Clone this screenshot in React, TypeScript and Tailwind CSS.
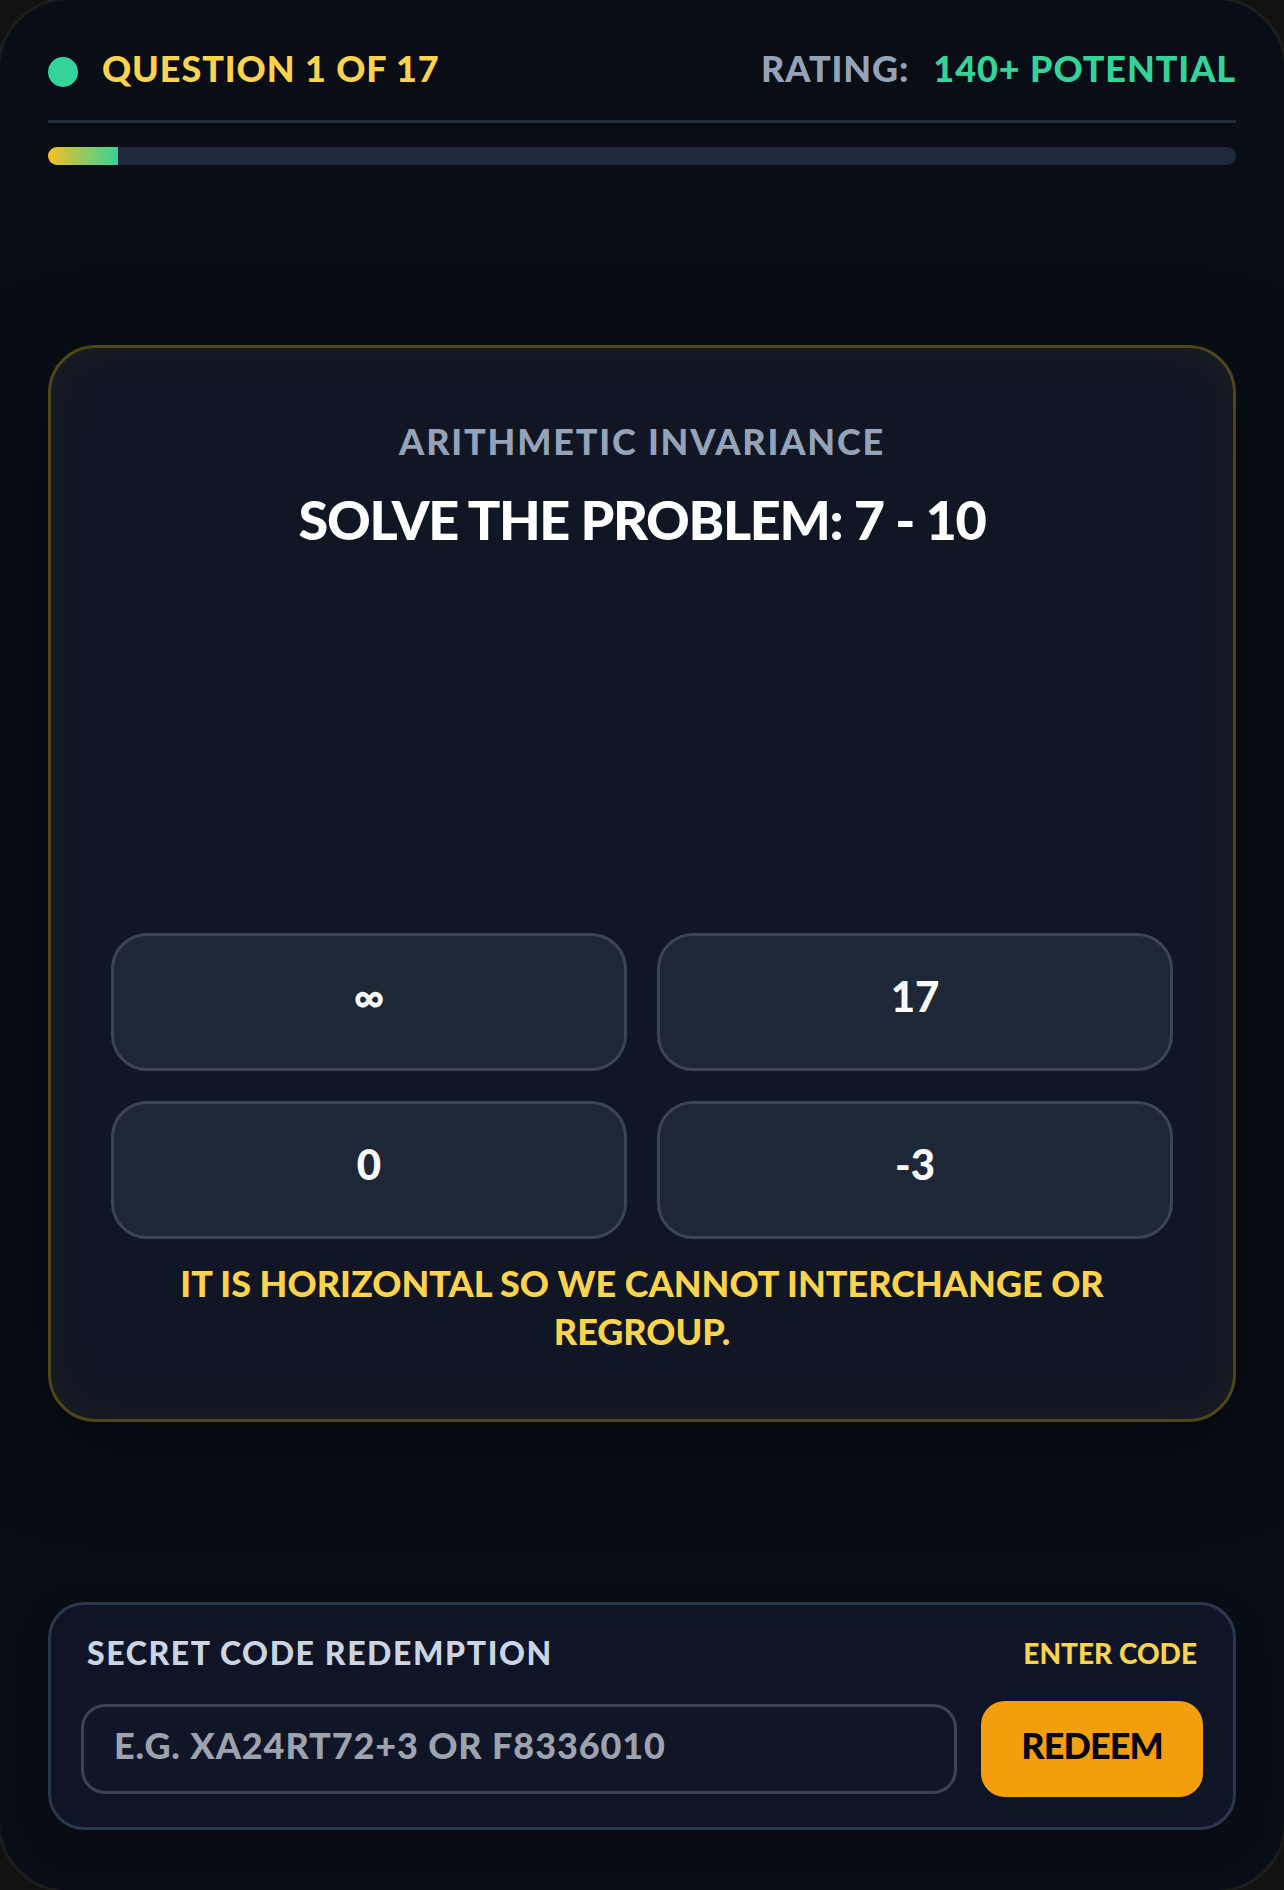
import React, { useState } from 'react';
import clsx from 'clsx';

const TOTAL = 17;

const ANSWERS = ['∞', '17', '0', '-3'];

const Header = ({ current }: { current: number }) => (
  <header>
    <div className="flex items-center justify-between border-b-[3px] border-[#232c3f] pb-7">
      <div className="flex items-center gap-6 text-[#fcd34d]">
        <span className="mt-2 size-[30px] rounded-full bg-[#34d399]" />
        <span className="tracking-wide">QUESTION {current} OF {TOTAL}</span>
      </div>
      <div className="flex items-center gap-6">
        <span className="tracking-wide text-[#94a3b8]">RATING:</span>
        <span className="tracking-wide text-[#34d399]">140+ POTENTIAL</span>
      </div>
    </div>
    <div className="mt-6 h-[18px] overflow-hidden rounded-full bg-[#1e293b]">
      <div
        className="h-full bg-linear-to-r/srgb from-[#fbbf24] to-[#34d399]"
        style={{ width: `${(current / TOTAL) * 100}%` }}
      />
    </div>
  </header>
);

const AnswerButton = ({ label, selected, onClick }: { label: string, selected: boolean, onClick: () => void }) => (
  <button
    onClick={onClick}
    className={clsx(
      'h-[138px] cursor-pointer rounded-[36px] border-[3px] bg-[#1e2737] pb-3 text-[42px] leading-[48px] text-slate-50',
      selected ? 'border-[#fbbf24]' : 'border-[#3d4453]'
    )}
  >
    {label}
  </button>
);

const QuestionCard = () => {
  const [selected, setSelected] = useState<string | null>(null);

  return (
    <section className="w-full rounded-[48px] border-[3px] border-[#4e4519] bg-[#101623] px-[60px] pt-[69px] pb-16 text-center shadow-[0_24px_90px_rgba(0,0,0,0.5),inset_0_0_45px_rgba(250,204,21,0.05)]">
      <div className="min-h-[516px]">
        <p className="tracking-wider text-[#94a3b8]">ARITHMETIC INVARIANCE</p>
        <h1 className="mt-5 text-[54px] leading-[70px] tracking-tight text-white">SOLVE THE PROBLEM: 7 - 10</h1>
      </div>
      <div className="grid grid-cols-2 gap-[30px]">
        {ANSWERS.map((a) => (
          <AnswerButton key={a} label={a} selected={selected === a} onClick={() => setSelected(a)} />
        ))}
      </div>
      <p className="mt-5 text-[#fcd34d]">
        IT IS HORIZONTAL SO WE CANNOT INTERCHANGE OR REGROUP.
      </p>
    </section>
  );
};

const RedeemPanel = () => {
  const [code, setCode] = useState('');

  return (
    <form
      onSubmit={(e) => e.preventDefault()}
      className="rounded-[36px] border-[3px] border-[#2a384c] bg-[#0f1526] px-[30px] pt-6 pb-[30px] shadow-[0_12px_36px_rgba(0,0,0,0.2)]"
    >
      <div className="flex items-center justify-between px-1.5">
        <label htmlFor="code" className="text-[32px] tracking-wider text-[#cbd5e1]">SECRET CODE REDEMPTION</label>
        <span className="text-[28px] text-[#fcd34d]">ENTER CODE</span>
      </div>
      <div className="mt-6 flex items-center gap-6">
        <input
          id="code"
          value={code}
          onChange={(e) => setCode(e.target.value)}
          placeholder="E.G. XA24RT72+3 OR F8336010"
          className="h-[90px] min-w-0 flex-1 rounded-3xl border-[3px] border-[#3d4151] bg-[#101527] px-[30px] pb-2 tracking-wide text-white outline-none placeholder:text-[#9ca3af]"
        />
        <button className="h-24 w-[222px] cursor-pointer rounded-3xl bg-[#f59e0b] pb-2 tracking-tight text-[#020617]">REDEEM</button>
      </div>
    </form>
  );
};

export default function App() {
  return (
    <div className="flex min-h-screen flex-col overflow-hidden bg-[#111111] font-['Lato',sans-serif] text-[36px] leading-[48px] font-black">
      <div className="-m-[3px] flex flex-1 flex-col rounded-[72px] border-[3px] border-[#1c1c1c] bg-[#090e16] px-12 pt-11 pb-[60px]">
        <Header current={1} />
        <main className="flex flex-1 items-center">
          <QuestionCard />
        </main>
        <RedeemPanel />
      </div>
    </div>
  );
}
